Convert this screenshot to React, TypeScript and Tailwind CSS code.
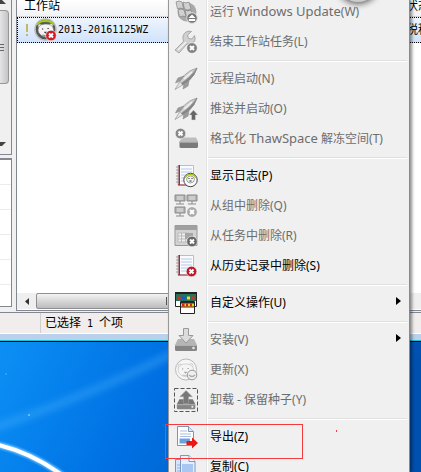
import type { ReactNode } from 'react'
import { clsx } from 'clsx'

type MenuEntry =
  | { type: 'separator' }
  | { type: 'item'; label: ReactNode; icon: ReactNode; disabled?: boolean; submenu?: boolean }

function Icon({ children }: { children: ReactNode }) {
  return (
    <svg viewBox="0 0 24 24" className="size-6 shrink-0" aria-hidden="true">
      {children}
    </svg>
  )
}

function Badge({ x, y, color }: { x: number; y: number; color: string }) {
  return (
    <g>
      <circle cx={x} cy={y} r="5.3" fill={color} stroke="#fff" strokeOpacity=".7" strokeWidth=".8" />
      <path d={`M${x - 2} ${y - 2}l4 4m0-4l-4 4`} stroke="#fff" strokeWidth="2" />
    </g>
  )
}

function BearFace() {
  return (
    <g fill="#f4f4f4" stroke="#777" strokeWidth=".6">
      <circle cx="6" cy="8" r="2" />
      <circle cx="17" cy="7.5" r="2" />
      <path d="M4 12Q4.5 6 11.5 6T19.5 11Q20 15.5 15.5 17.5Q11 20 7.5 17.5T4 12Z" />
      <path d="M8 11h1.2M13.5 10.5h1.2" stroke="#222" strokeWidth="1.2" />
      <path d="M10 14h3l-1.5 1.5z" fill="#222" />
      <path d="M8.5 17q3 1.5 6-.5" fill="none" stroke="#333" />
    </g>
  )
}

function RocketShape() {
  return (
    <g stroke="#888" strokeWidth=".6">
      <path d="M23 1Q15 3 9.5 9L5.5 15L8.5 18L15 13.5Q21 8 23 1Z" fill="#cfcfcf" />
      <path d="M23 1Q21 8 15 13.5L8.5 18L7 16.5Q16 11 23 1Z" fill="#868686" />
      <path d="M10 9L4 11L1.5 16L6 14ZM15 13.5L14 19L9 22L10 17Z" fill="#9c9c9c" />
      <path d="M5.5 15L1 22.5L8.5 18" fill="#e4e4e4" />
      <path d="M10 12L18 5" stroke="#f2f2f2" strokeWidth="1.4" />
    </g>
  )
}

function NotebookShape() {
  return (
    <g>
      <path d="M4 1.5h15.500v19.500H4z" fill="#f9fbff" stroke="#b9bfc8" />
      <path d="M7 5h11M7 8h11M7 11h11M7 14h11M7 17h10" stroke="#b5c8e6" strokeWidth="1" />
      <path d="M4.500 1H6v20H4.500z" fill="#a02a38" />
      <path d="M4 21h14" stroke="#a02a38" strokeWidth="1" />
      <path d="M2 3h3M2 6h3M2 9h3M2 12h3M2 15h3M2 18h3" stroke="#888" strokeWidth=".8" />
    </g>
  )
}

function DriveShape({ dark }: { dark?: boolean }) {
  return (
    <g>
      <path d="M4 11h16l3 6H1z" fill={dark ? '#777' : '#b5b5b5'} />
      <path d="M1 17h22v4.5q0 1.5-1.5 1.5h-19Q1 23 1 21.5z" fill="#858585" />
      <path d="M1 17.5h22" stroke="#bbb" strokeWidth=".8" />
      <circle cx="19.5" cy="20" r="1.3" fill="#e6e6e6" />
    </g>
  )
}

function UpdateIcon() {
  return (
    <Icon>
      <circle cx="13" cy="12" r="9.5" fill="#a9a9a9" />
      <path d="M2 2Q5 0 8 2L9.5 9Q6 7 3.5 9ZM9 2Q12 4 15 2L17 9Q13 11 10.5 9ZM4 10Q7 8 10 10L12 17Q8 15 5.5 17ZM11 10Q14 12 17 10L19 17Q16 19 12.5 17Z" fill="#d1d1d1" stroke="#858585" strokeWidth=".7" />
      <circle cx="18" cy="18" r="5.3" fill="#777" stroke="#ddd" />
      <path d="M18 14.5l3.5 3.5h-7zM14.8 19h6.4v2h-6.4z" fill="#fff" />
    </Icon>
  )
}

function WrenchIcon() {
  return (
    <Icon>
      <path d="M1 20L9.5 11.500Q7.500 5 12 2Q15 .5 17.500 1.500L13.500 5L14.500 8.500L18 9L20.500 5.500Q22.500 11 18 13.500Q15 14.500 13 14L5 23Z" fill="#d0d0d0" stroke="#999" strokeWidth=".8" />
      <path d="M4 20l8-8" stroke="#f1f1f1" strokeWidth="1.4" />
      <Badge x={18} y={18} color="#808080" />
    </Icon>
  )
}

function RocketIcon() {
  return (
    <Icon>
      <RocketShape />
    </Icon>
  )
}

function RocketPushIcon() {
  return (
    <Icon>
      <RocketShape />
      <path d="M19.5 13l4.5 5h-2.5v5h-4v-5H15z" fill="#666" stroke="#ddd" strokeWidth=".5" />
    </Icon>
  )
}

function FormatIcon() {
  return (
    <Icon>
      <path d="M8 10.5h14l2 4H5.5z" fill="#bdbdbd" />
      <path d="M5.5 14.5H24v5q0 1.5-1.5 1.5H7q-1.5 0-1.5-1.5z" fill="#7a7a7a" />
      <path d="M6 15h18" stroke="#ccc" />
      <Badge x={6.5} y={6.5} color="#888" />
    </Icon>
  )
}

function LogIcon() {
  return (
    <Icon>
      <NotebookShape />
      <circle cx="16.500" cy="16" r="6.700" fill="#fff" stroke="#444" />
      <path d="M11.5 14Q12 10.500 16.500 10.500T21.5 14" fill="none" stroke="#a7c51b" strokeWidth="1.3" />
      <path d="M12.500 15q1-3 4-3t4 3q0 4-4 4t-4-4z" fill="#f5f5f5" stroke="#666" strokeWidth=".6" />
      <path d="M14.500 14.5h1M17.500 14.5h1M15.500 17h2" stroke="#222" strokeWidth="1.2" />
    </Icon>
  )
}

function GroupRemoveIcon() {
  const screens = [
    [1, 1],
    [13, 1],
    [1, 13],
  ]
  return (
    <Icon>
      {screens.map(([x, y]) => (
        <g key={`${x}-${y}`}>
          <path d={`M${x} ${y}h10v6H${x}z`} fill="#b4b4b4" stroke="#8a8a8a" />
          <path d={`M${x + 2} ${y + 2}h6M${x + 2} ${y + 4}h6`} stroke="#e4e4e4" />
          <path d={`M${x + 5} ${y + 6}v3M${x + 1} ${y + 9}h8`} stroke="#8a8a8a" />
        </g>
      ))}
      <Badge x={18} y={18} color="#aaa" />
    </Icon>
  )
}

function TaskRemoveIcon() {
  return (
    <Icon>
      <path d="M1 1.5h22v20H1z" fill="#d2d2d2" stroke="#999" />
      <path d="M1 1.5h22V6H1z" fill="#a0a0a0" />
      <path d="M4 9h11v9H4zM7.5 9v9M11.5 9v9M4 12h11M4 15h11" fill="#eee" stroke="#bbb" />
      <path d="M11 9h8v6h-8z" fill="#a5a5a5" />
      <Badge x={18} y={17.5} color="#666" />
    </Icon>
  )
}

function HistoryRemoveIcon() {
  return (
    <Icon>
      <NotebookShape />
      <Badge x={17.5} y={17.5} color="#b91d2a" />
    </Icon>
  )
}

function CustomIcon() {
  return (
    <Icon>
      <path d="M1.5 1.5h21v14h-21z" fill="#fff" stroke="#222" />
      <path d="M1 1h22v2H1z" fill="#222" />
      <path d="M2 3h20v7H2z" fill="#24735a" />
      <path d="M3.500 5.500h3v3h-3zM17.500 5.500h3v3h-3z" fill="#e12c1f" />
      <path d="M8 5.500h3v3H8z" fill="#2354d2" />
      <path d="M13 5.500h3v3h-3z" fill="#f5df20" />
      <path d="M6.5 10.5h14v12h-14z" fill="#fff" stroke="#222" />
      <path d="M7 11h13v5.500H7z" fill="#2a2a2a" />
      <path d="M7 12.500h13v3H7z" fill="#f0d021" />
      <path d="M8 12.500h2.500v3H8zM12 12.500h2v3h-2zM16 12.500h2v3h-2z" fill="#d52419" />
    </Icon>
  )
}

function InstallIcon() {
  return (
    <Icon>
      <DriveShape />
      <path d="M9.5.5h5v7H19L12 15L5 7.5h4.5z" fill="#dcdcdc" stroke="#999" />
    </Icon>
  )
}

function RefreshIcon() {
  return (
    <Icon>
      <circle cx="12" cy="11.5" r="10.5" fill="#f6f6f6" stroke="#b9b9b9" />
      <g opacity=".45">
        <BearFace />
      </g>
      <circle cx="18" cy="17" r="4.8" fill="#eee" stroke="#999" />
      <path d="M15 17q3 3 6 0" fill="none" stroke="#aaa" strokeWidth="1.4" />
    </Icon>
  )
}

function UninstallIcon() {
  return (
    <Icon>
      <path d="M.5.5h23v23H.5z" fill="none" stroke="#555" strokeDasharray="4 2" />
      <g transform="translate(2 2) scale(.84)">
        <DriveShape dark />
        <path d="M12 .5L19.5 8H15v8H9V8H4.5z" fill="#777" stroke="#aaa" strokeWidth=".6" />
      </g>
    </Icon>
  )
}

function ExportIcon() {
  return (
    <Icon>
      <path d="M3.5 1.5h11l5 5v14h-16z" fill="#fff" stroke="#7e94b4" />
      <path d="M14.5 1.5v5h5" fill="#d8e6f7" stroke="#7e94b4" />
      <path d="M6 6h7M6 9h11M6 11.500h11" stroke="#a9bfe0" />
      <path d="M5.5 13.5H16v5H5.5z" fill="#6e9fe0" />
      <path d="M12.500 16H18v-3.5l6 5.5l-6 5.5V20h-5.500z" fill="#e81914" />
    </Icon>
  )
}

function CopyIcon() {
  return (
    <Icon>
      <path d="M1.5 4.500h11v19h-11z" fill="#d6e5fa" stroke="#7c97c2" />
      <path d="M3 10h4M3 13h4M3 16h4" stroke="#8fb2e6" />
      <path d="M6.5.5H15l6 6v17H6.5z" fill="#e6f0fd" stroke="#7c97c2" />
      <path d="M15 .5v6h6" fill="#fff" stroke="#7c97c2" />
      <path d="M8 9h11v12H8z" fill="#a9c8f1" />
    </Icon>
  )
}

function WorkstationIcon() {
  return (
    <Icon>
      <circle cx="11.5" cy="11.5" r="10.5" fill="#555" stroke="#bbb" strokeWidth="1.5" />
      <path d="M3.500 7Q5 3 11.500 3T19.500 7" fill="none" stroke="#a6cc13" strokeWidth="2" />
      <BearFace />
      <Badge x={17} y={17.5} color="#d01c22" />
    </Icon>
  )
}

function Latin({ children }: { children: ReactNode }) {
  return <span className="text-[13px]">{children}</span>
}

const entries: MenuEntry[] = [
  { type: 'item', label: <>运行 <Latin>Windows Update</Latin>(W)</>, icon: <UpdateIcon />, disabled: true },
  { type: 'item', label: '结束工作站任务(L)', icon: <WrenchIcon />, disabled: true },
  { type: 'separator' },
  { type: 'item', label: '远程启动(N)', icon: <RocketIcon />, disabled: true },
  { type: 'item', label: '推送并启动(O)', icon: <RocketPushIcon />, disabled: true },
  { type: 'item', label: <>格式化 <Latin>ThawSpace</Latin> 解冻空间(T)</>, icon: <FormatIcon />, disabled: true },
  { type: 'separator' },
  { type: 'item', label: '显示日志(P)', icon: <LogIcon /> },
  { type: 'item', label: '从组中删除(Q)', icon: <GroupRemoveIcon />, disabled: true },
  { type: 'item', label: '从任务中删除(R)', icon: <TaskRemoveIcon />, disabled: true },
  { type: 'item', label: '从历史记录中删除(S)', icon: <HistoryRemoveIcon /> },
  { type: 'separator' },
  { type: 'item', label: '自定义操作(U)', icon: <CustomIcon />, submenu: true },
  { type: 'separator' },
  { type: 'item', label: '安装(V)', icon: <InstallIcon />, disabled: true, submenu: true },
  { type: 'item', label: '更新(X)', icon: <RefreshIcon />, disabled: true },
  { type: 'item', label: '卸载 - 保留种子(Y)', icon: <UninstallIcon />, disabled: true },
  { type: 'separator' },
  { type: 'item', label: '导出(Z)', icon: <ExportIcon /> },
  { type: 'item', label: '复制(C)', icon: <CopyIcon /> },
]

function ContextMenu() {
  return (
    <div
      role="menu"
      className="absolute inset-y-0 left-[168px] w-[242px] overflow-hidden border-x border-l-[#979797] border-r-[#8a8a8a] bg-[#f0f0f0] shadow-[2px_0_3px_rgba(0,0,0,0.45)]"
    >
      <div className="-mt-[3px] flex flex-col bg-[linear-gradient(to_right,transparent_37px,#e2e3e3_37px,#e2e3e3_38px,#fff_38px,#fff_39px,transparent_39px)]">
        {entries.map((entry, i) =>
          entry.type === 'separator' ? (
            <div key={i} role="separator" className="flex h-[7px] items-center pr-0.5 pl-[39px]">
              <div className="h-0.5 w-full border-t border-b border-t-[#e0e0e0] border-b-white" />
            </div>
          ) : (
            <button
              key={i}
              type="button"
              role="menuitem"
              disabled={entry.disabled}
              className={clsx(
                'flex h-[30px] items-center gap-3 pr-2 pl-[5px] text-left text-xs whitespace-nowrap',
                entry.disabled ? 'text-[#6d6d6d]' : 'text-black',
              )}
            >
              {entry.icon}
              <span className="flex-1">{entry.label}</span>
              {entry.submenu && (
                <svg viewBox="0 0 5 8" className="mb-1 h-2 w-[5px]" aria-hidden="true">
                  <path d="M0 0l5 4l-5 4z" fill="#000" />
                </svg>
              )}
            </button>
          ),
        )}
      </div>
    </div>
  )
}

function SidePanes() {
  return (
    <div className="flex w-3 shrink-0 flex-col gap-[3px]">
      <div className="flex h-[155px] flex-col items-start justify-between border-r border-b border-[#828790] bg-[#f0f0f0]">
        <svg viewBox="0 0 6 4" className="h-1 w-1.5" aria-hidden="true">
          <path d="M0 0h2l4 4H0z" fill="#444" />
        </svg>
        <div className="mb-13 flex h-[74px] w-[9px] flex-col justify-center gap-0.5 rounded-r-sm border border-l-0 border-[#979797] bg-linear-to-r from-[#e4e4e6] to-[#c4c4c8] pr-1">
          <div className="h-px bg-[#666]" />
          <div className="h-px bg-[#666]" />
          <div className="h-px bg-[#666]" />
        </div>
        <svg viewBox="0 0 6 4" className="mb-2 h-1 w-1.5" aria-hidden="true">
          <path d="M0 0h6L2 4H0z" fill="#444" />
        </svg>
      </div>
      <div className="mb-1 flex-1 border-t-2 border-r border-b border-[#828790] bg-white bg-[repeating-linear-gradient(to_bottom,transparent_0,transparent_24px,#ececec_24px,#ececec_25px)]" />
    </div>
  )
}

function WorkstationList() {
  return (
    <div className="flex min-w-0 flex-1 flex-col overflow-hidden border-b border-l border-[#828790] bg-white">
      <table className="w-full table-fixed border-separate border-spacing-0 text-xs">
        <thead>
          <tr className="h-4 bg-linear-to-b from-white to-[#f1f2f4]">
            <th scope="col" className="w-[389px] border-b border-[#d5d5d5] p-0 pb-1 pl-[7px] text-left leading-3 font-normal">
              工作站
            </th>
            <th scope="col" className="border-b border-[#d5d5d5] p-0 pb-1 text-left leading-3 font-normal whitespace-nowrap">
              状态
            </th>
          </tr>
        </thead>
        <tbody>
          <tr className="h-[26px] bg-linear-to-b from-[#eff5fd] to-[#cfe2fb]">
            <td className="border-y border-l border-dotted border-black p-0 pl-0.5">
              <div className="flex items-center">
                <span className="flex w-[14px] flex-col items-center gap-0.5">
                  <span className="h-2 w-0.5 bg-[#c3b95f]" />
                  <span className="h-0.5 w-0.5 bg-[#c3b95f]" />
                </span>
                <WorkstationIcon />
                <span className="font-['DejaVu_Sans_Mono',monospace] text-[10px]">2013-20161125WZ</span>
              </div>
            </td>
            <td className="border-y border-dotted border-black p-0 whitespace-nowrap">税程</td>
          </tr>
        </tbody>
      </table>
      <div className="flex-1" />
      <div className="flex h-4 bg-[#efefef]">
        <div className="flex w-[19px] items-center justify-center">
          <svg viewBox="0 0 4 7" className="h-[7px] w-1" aria-hidden="true">
            <path d="M4 0v7L0 3.5z" fill="#333" />
          </svg>
        </div>
        <div className="flex w-[267px] items-center justify-center gap-0.5 rounded-xs border border-[#8f8f8f] bg-linear-to-b from-[#f3f3f3] to-[#bcbcbf]">
          <div className="h-2 w-px bg-[#555]" />
          <div className="h-2 w-px bg-[#555]" />
          <div className="h-2 w-px bg-[#555]" />
        </div>
      </div>
      <div className="h-px" />
    </div>
  )
}

function Desktop() {
  return (
    <div className="min-h-32 flex-1 bg-[#0057b3]">
      <svg viewBox="0 0 421 130" preserveAspectRatio="xMinYMin slice" className="h-full w-full" aria-hidden="true">
        <defs>
          <linearGradient id="sky" x1="0" y1="0" x2="1" y2=".15">
            <stop offset="0" stopColor="#0c90f5" />
            <stop offset=".2" stopColor="#0580ec" />
            <stop offset=".4" stopColor="#0070e2" />
            <stop offset="1" stopColor="#0050b0" />
          </linearGradient>
          <filter id="soft" x="-20%" y="-50%" width="140%" height="200%">
            <feGaussianBlur stdDeviation="1" />
          </filter>
          <filter id="haze" x="-20%" y="-50%" width="140%" height="200%">
            <feGaussianBlur stdDeviation="3" />
          </filter>
        </defs>
        <path d="M0 0h421v130H0z" fill="url(#sky)" />
        <path d="M-10 87Q84 56 180 8" fill="none" stroke="#4fb4ff" strokeOpacity=".32" strokeWidth="9" filter="url(#haze)" />
        <path d="M-6 102Q32 110 66 136" fill="none" stroke="#7cc8ff" strokeWidth="6" filter="url(#soft)" />
        <path d="M-6 102Q32 110 66 136" fill="none" stroke="#fff" strokeWidth="4" />
        <circle cx="29" cy="73" r="1" fill="#7cc8ff" />
        <circle cx="6" cy="32" r="1" fill="#3aa5fa" />
      </svg>
    </div>
  )
}

export default function App() {
  return (
    <div className="relative flex h-screen min-h-[472px] flex-col overflow-hidden bg-[#f0f0f0] font-['Noto_Sans','Noto_Sans_CJK_SC',sans-serif] text-black">
      <div className="flex h-[312px] gap-1">
        <SidePanes />
        <WorkstationList />
      </div>
      <div className="mt-px flex h-[21px] border-t border-[#828790] bg-[#f0edec] text-xs">
        <div className="w-[41px] border-r border-[#d0cfcf]" />
        <div className="flex items-center pl-1">
          <p>
            已选择<span className="font-['DejaVu_Sans_Mono',monospace] text-[10px]"> 1 </span>个项
          </p>
        </div>
      </div>
      <div className="h-2 border-t border-b border-t-white border-b-[#18c5d8] bg-[#b9d1ea]" />
      <div className="flex flex-1 flex-col border-t border-black">
        <Desktop />
      </div>

      <ContextMenu />

      <div className="absolute -top-[38px] left-[338px] size-10 rounded-full bg-[#ccc] shadow-[0_0_6px_2px_rgba(0,0,0,0.6)]" />
      <div className="pointer-events-none absolute top-[424px] left-[165px] h-[35px] w-[138px] border border-[#f53b3b]" />
      <div className="pointer-events-none absolute top-[430px] left-[336px] h-0.5 w-px bg-[#f53b3b]" />
    </div>
  )
}
